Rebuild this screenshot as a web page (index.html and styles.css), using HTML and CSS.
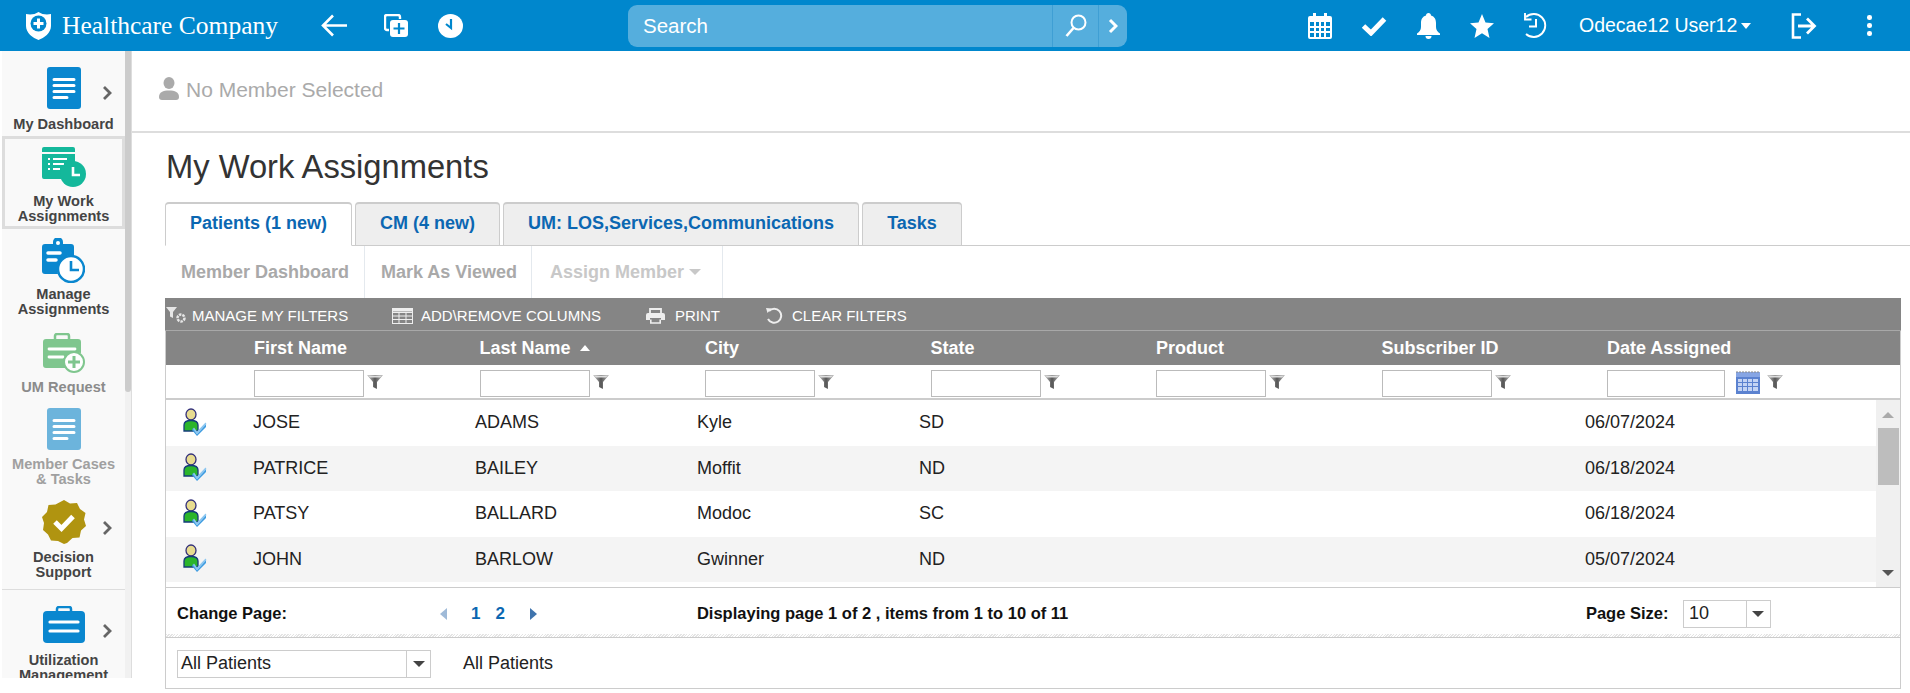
FILE: index.html
```html
<!DOCTYPE html>
<html lang="en">
<head>
<meta charset="utf-8">
<title>My Work Assignments</title>
<link rel="stylesheet" href="styles.css">
</head>
<body>
<svg class="defs" width="0" height="0" aria-hidden="true">
  <defs>
    <linearGradient id="fngrad" x1="0" y1="0" x2="1" y2="0">
      <stop offset="0" stop-color="#ccc"/>
      <stop offset=".5" stop-color="#555"/>
      <stop offset="1" stop-color="#bbb"/>
    </linearGradient>
    <symbol id="funnel" viewBox="0 0 16 14">
      <path d="M0 0H16L10 7V14L6 12V7Z" fill="url(#fngrad)"/>
      <path d="M1 .5H15L13 2.500H3Z" fill="#ddd"/>
    </symbol>
    <symbol id="person" viewBox="0 0 24 28">
      <ellipse cx="8" cy="6.500" rx="5" ry="5.500" fill="#e8dc90" stroke="#33307a" stroke-width="1.300"/>
      <path d="M1 23V17C1 13.500 4 12.500 8 12.500S15 13.500 15 17V23Z" fill="#2bb52b" stroke="#143c7a" stroke-width="1.300"/>
      <path d="M10 20L14 26L23 16V19L14 28L9 22Z" fill="#3d9be0"/>
      <path d="M11 19.500L14 23.500L22.500 14.500L23.500 16L14 26.500L10 21Z" fill="#8cc6f0"/>
    </symbol>
    <symbol id="chev" viewBox="0 0 10 16">
      <path d="M2 2L8 8L2 14" fill="none" stroke="#666" stroke-width="2.800"/>
    </symbol>
  </defs>
</svg>

<header class="topbar">
  <svg class="shield" width="25" height="28" viewBox="0 0 25 28"><path d="M0 2C4 3 9 2.500 12.500 0C16 2.500 21 3 25 2V14C25 21 18 26 12.500 28C7 26 0 21 0 14Z" fill="#fff"/><circle cx="12.500" cy="11.500" r="8" fill="#0087cd"/><path d="M12.500 6.500V16.500M7.500 11.500H17.500" stroke="#fff" stroke-width="3"/></svg>
  <span class="brand">Healthcare Company</span>
  <svg class="back" width="26" height="23" viewBox="0 0 26 23"><path d="M12 1.500L2 11.500L12 21.500M2 11.500H26" fill="none" stroke="#fff" stroke-width="2.600"/></svg>
  <svg class="copy" width="25" height="24" viewBox="0 0 25 24"><path d="M5 16H3A2 2 0 0 1 1 14V3A2 2 0 0 1 3 1H14A2 2 0 0 1 16 3V5" fill="none" stroke="#fff" stroke-width="2.400"/><rect x="6" y="6" width="18" height="17" rx="3" fill="#fff"/><path d="M15 9V20M9.500 14.500H20.500" stroke="#0087cd" stroke-width="2.200"/></svg>
  <svg class="clock" width="25" height="24" viewBox="0 0 25 24"><ellipse cx="12.500" cy="12" rx="12.500" ry="12" fill="#fff"/><path d="M13 5V14L8 10" fill="none" stroke="#0087cd" stroke-width="2.200"/></svg>
  <div class="search">
    <span class="search-text">Search</span>
    <span class="search-btn"><svg width="22" height="24" viewBox="0 0 22 24"><circle cx="13.500" cy="8.500" r="7" fill="none" stroke="#fff" stroke-width="2"/><path d="M8.500 14L1.500 22" stroke="#fff" stroke-width="2.600"/></svg></span>
    <span class="search-more"><svg width="10" height="16" viewBox="0 0 10 16"><path d="M2 2L8 8L2 14" fill="none" stroke="#fff" stroke-width="3"/></svg></span>
  </div>
  <svg class="cal" width="24" height="26" viewBox="0 0 24 26"><path fill-rule="evenodd" fill="#fff" d="M2 3H5V0H8V3H16V0H19V3H22A2 2 0 0 1 24 5V24A2 2 0 0 1 22 26H2A2 2 0 0 1 0 24V5A2 2 0 0 1 2 3ZM2 9V13H6V9ZM8 9V13H11V9ZM13 9V13H16V9ZM18 9V13H22V9ZM2 15V18H6V15ZM8 15V18H11V15ZM13 15V18H16V15ZM18 15V18H22V15ZM2 20V24H6V20ZM8 20V24H11V20ZM13 20V24H16V20ZM18 20V24H22V20Z"/></svg>
  <svg class="check" width="26" height="20" viewBox="0 0 26 20"><path d="M2.500 10L10 17L23.500 3" fill="none" stroke="#fff" stroke-width="5"/></svg>
  <svg class="bell" width="23" height="26" viewBox="0 0 23 26"><path d="M11.500 0C13 0 14 1 14 2.500C17.500 3.500 19 6.500 19 10V14C19 17 20.500 19 23 20.500V22H0V20.500C2.500 19 4 17 4 14V10C4 6.500 5.500 3.500 9 2.500C9 1 10 0 11.500 0Z" fill="#fff"/><path d="M8.500 23H14.500A3 3 0 0 1 8.500 23Z" fill="#fff"/></svg>
  <svg class="star" width="24" height="24" viewBox="0 0 24 24"><path d="M12 0L15.500 8.500L24 9.200L17.500 15L19.500 24L12 19.200L4.500 24L6.500 15L0 9.200L8.500 8.500Z" fill="#fff"/></svg>
  <svg class="hist" width="25" height="25" viewBox="0 0 25 25"><path d="M3 4A11.500 11.500 0 1 1 3 21" fill="none" stroke="#fff" stroke-width="1.900"/><path d="M2 1V7.500H8.500" fill="none" stroke="#fff" stroke-width="1.900" transform="translate(0 -1)"/><path d="M13 6V13.500H6" fill="none" stroke="#fff" stroke-width="2"/></svg>
  <span class="user">Odecae12 User12</span><span class="user-caret"></span>
  <svg class="logout" width="26" height="26" viewBox="0 0 26 26"><path d="M10 1.500H2V24.500H10" fill="none" stroke="#fff" stroke-width="2.600"/><path d="M7 13H23M16 5.500L23.500 13L16 20.500" fill="none" stroke="#fff" stroke-width="2.800"/></svg>
  <span class="kebab"><i></i><i></i><i></i></span>
</header>

<div class="shell">
  <nav class="sidebar">
    <div class="nav-list">
      <a class="nav-item item-dash">
        <svg width="34" height="42" viewBox="0 0 34 42"><rect width="34" height="42" rx="3" fill="#0a87cf"/><path d="M7 12.500H27M7 18.500H27M7 24.500H27M7 30.500H20" stroke="#fff" stroke-width="3" stroke-linecap="round"/></svg>
        <span class="nav-label">My Dashboard</span>
        <svg class="nav-chev" width="10" height="16"><use href="#chev"/></svg>
      </a>
      <a class="nav-item nav-active item-work">
        <svg width="44" height="40" viewBox="0 0 44 40"><path d="M2 0H31A2 2 0 0 1 33 2V5H0V2A2 2 0 0 1 2 0Z" fill="#14b89b"/><path d="M0 7H33V18A13 13 0 0 0 19 32H2A2 2 0 0 1 0 30Z" fill="#14b89b"/><path d="M6 12H8M11 12H25M6 17H8M11 17H22M6 22H8M11 22H18" stroke="#fff" stroke-width="2"/><circle cx="31" cy="27" r="13" fill="#14b89b"/><circle cx="31" cy="27" r="10.500" fill="none" stroke="#14b89b"/><path d="M31 20V28H38" fill="none" stroke="#fff" stroke-width="2.600"/></svg>
        <span class="nav-label">My Work<br>Assignments</span>
      </a>
      <a class="nav-item item-manage">
        <svg width="43" height="45" viewBox="0 0 43 45"><path d="M3 6H11V4A5 5 0 0 1 21 4V6H29A3 3 0 0 1 32 9V17A15 15 0 0 0 16 36H3A3 3 0 0 1 0 33V9A3 3 0 0 1 3 6Z" fill="#0a87cf"/><circle cx="16" cy="5" r="2" fill="#fff"/><path d="M6 15H18M6 22H14" stroke="#fff" stroke-width="3.500" stroke-linecap="round"/><circle cx="29" cy="31" r="13" fill="#fff" stroke="#0a87cf" stroke-width="2.500"/><path d="M29 23V32H37" fill="none" stroke="#0a87cf" stroke-width="2.600"/></svg>
        <span class="nav-label">Manage<br>Assignments</span>
      </a>
      <a class="nav-item item-um nav-muted">
        <svg width="42" height="40" viewBox="0 0 42 40"><path d="M12 6V3A2 2 0 0 1 14 1H24A2 2 0 0 1 26 3V6" fill="none" stroke="#7fc68e" stroke-width="2.500"/><path d="M3 6H35A3 3 0 0 1 38 9V20A14 14 0 0 0 22 35H3A3 3 0 0 1 0 32V9A3 3 0 0 1 3 6Z" fill="#7fc68e"/><path d="M6 16H32M6 24H20" stroke="#fff" stroke-width="2.800" stroke-linecap="round"/><circle cx="31" cy="29" r="10" fill="#fff" stroke="#7fc68e" stroke-width="2"/><path d="M31 23V35M25 29H37" stroke="#7fc68e" stroke-width="3"/></svg>
        <span class="nav-label">UM Request</span>
      </a>
      <a class="nav-item item-cases nav-faint">
        <svg width="34" height="42" viewBox="0 0 34 42"><rect width="34" height="42" rx="3" fill="#6cb4dc"/><path d="M7 12.500H27M7 18.500H27M7 24.500H27M7 30.500H20" stroke="#fff" stroke-width="3" stroke-linecap="round"/></svg>
        <span class="nav-label">Member Cases<br>&amp; Tasks</span>
      </a>
      <a class="nav-item item-decision">
        <svg width="44" height="44" viewBox="0 0 44 44"><path d="M22 0L28 3.500L35 3L38 9L43.500 13L42 19.500L44 26L39 30.500L37.500 37.500L30.500 38L25 43L22 44L16 41L9 40.500L6 34.500L1 30L2 23L0 17L5 12L6.500 5L13.500 4.500Z" fill="#b09410"/><path d="M13 22L19.500 28.500L31 16.500" fill="none" stroke="#fff" stroke-width="5"/></svg>
        <span class="nav-label">Decision<br>Support</span>
        <svg class="nav-chev" width="10" height="16"><use href="#chev"/></svg>
      </a>
      <a class="nav-item item-util">
        <svg width="42" height="37" viewBox="0 0 42 37"><path d="M14 6V3A2 2 0 0 1 16 1H26A2 2 0 0 1 28 3V6" fill="none" stroke="#0a87cf" stroke-width="2.500"/><rect y="5" width="42" height="32" rx="4" fill="#0a87cf"/><path d="M7 16H35M7 25H35" stroke="#fff" stroke-width="3.200" stroke-linecap="round"/></svg>
        <span class="nav-label">Utilization<br>Management</span>
        <svg class="nav-chev" width="10" height="16"><use href="#chev"/></svg>
      </a>
    </div>
    <div class="side-scroll"><div class="side-thumb"></div></div>
  </nav>

  <main class="content">
    <div class="member-bar">
      <svg width="20" height="23" viewBox="0 0 20 23"><ellipse cx="10" cy="6" rx="5.500" ry="6" fill="#aaa"/><path d="M0 20C0 15 4 13.500 10 13.500S20 15 20 20C20 22 19 23 17 23H3C1 23 0 22 0 20Z" fill="#aaa"/></svg>
      <span>No Member Selected</span>
    </div>

    <h1 class="page-title">My Work Assignments</h1>

    <div class="tabs">
      <a class="tab tab-active tab-patients">Patients (1 new)</a>
      <a class="tab tab-cm">CM (4 new)</a>
      <a class="tab tab-um">UM: LOS,Services,Communications</a>
      <a class="tab tab-tasks">Tasks</a>
    </div>

    <div class="actions">
      <a class="action action-dash">Member Dashboard</a>
      <a class="action action-mark">Mark As Viewed</a>
      <a class="action action-assign">Assign Member<span class="caret-light"></span></a>
    </div>

    <section class="grid">
      <div class="toolbar">
        <span class="tool tool-filters">
          <svg width="21" height="17" viewBox="0 0 21 17"><path d="M0 0H11L7 5V11L4 9.500V5Z" fill="#e6e6e6"/><circle cx="15" cy="11" r="3.500" fill="none" stroke="#e6e6e6" stroke-width="2.500" stroke-dasharray="2.500 1"/></svg>MANAGE MY FILTERS</span>
        <span class="tool tool-cols">
          <svg width="21" height="16" viewBox="0 0 21 16"><rect x=".5" y=".5" width="20" height="15" fill="none" stroke="#eee"/><path d="M0 4.500H21M1 8H20M1 11.500H20M7 4V15M14 4V15" stroke="#eee"/><rect width="21" height="3.500" fill="#eee"/></svg>ADD\REMOVE COLUMNS</span>
        <span class="tool tool-print">
          <svg width="19" height="16" viewBox="0 0 19 16"><path d="M4 5V1H15V5" fill="none" stroke="#eee" stroke-width="1.800"/><path d="M2 5H17A2 2 0 0 1 19 7V12H15V10H4V12H0V7A2 2 0 0 1 2 5Z" fill="#eee"/><path d="M4.800 11.500V15H14.200V11.500" fill="none" stroke="#eee" stroke-width="1.600"/></svg>PRINT</span>
        <span class="tool tool-clear">
          <svg width="18" height="17" viewBox="0 0 18 17"><path d="M4 4A7 7 0 1 1 3 12" fill="none" stroke="#eee" stroke-width="2"/><path d="M1 1L6.500 1.500L2.500 6Z" fill="#eee"/></svg>CLEAR FILTERS</span>
      </div>

      <div class="head-row">
        <span class="head-spacer"></span>
        <span>First Name</span>
        <span>Last Name<i class="sort-up"></i></span>
        <span>City</span>
        <span>State</span>
        <span>Product</span>
        <span>Subscriber ID</span>
        <span>Date Assigned</span>
      </div>

      <div class="filter-row">
        <span class="head-spacer"></span>
        <div class="filter"><span class="fake-input"></span><svg class="fn" width="16" height="14"><use href="#funnel"/></svg></div>
        <div class="filter"><span class="fake-input"></span><svg class="fn" width="16" height="14"><use href="#funnel"/></svg></div>
        <div class="filter"><span class="fake-input"></span><svg class="fn" width="16" height="14"><use href="#funnel"/></svg></div>
        <div class="filter"><span class="fake-input"></span><svg class="fn" width="16" height="14"><use href="#funnel"/></svg></div>
        <div class="filter"><span class="fake-input"></span><svg class="fn" width="16" height="14"><use href="#funnel"/></svg></div>
        <div class="filter"><span class="fake-input"></span><svg class="fn" width="16" height="14"><use href="#funnel"/></svg></div>
        <div class="filter">
          <span class="fake-input input-date"></span>
          <svg class="cal-blue" width="24" height="23" viewBox="0 0 24 23"><rect y="1" width="24" height="22" fill="#5b82d0"/><rect y="1" width="24" height="5" fill="#86a5e4"/><path d="M1 0V2M4 0V2M7 0V2M10 0V2M13 0V2M16 0V2M19 0V2M22 0V2" stroke="#888"/><path fill="#c4d4f4" d="M2 8h4v3H2zM7 8h4v3H7zM12 8h4v3h-4zM17 8h5v3h-5zM2 12h4v3H2zM7 12h4v3H7zM12 12h4v3h-4zM17 12h5v3h-5zM2 16h4v4H2zM7 16h4v4H7zM12 16h4v4h-4zM17 16h5v4h-5z"/></svg>
          <svg class="fn fn-date" width="16" height="14"><use href="#funnel"/></svg>
        </div>
      </div>

      <div class="rows-wrap">
        <div class="rows">
          <div class="row"><svg width="24" height="28"><use href="#person"/></svg><span>JOSE</span><span>ADAMS</span><span>Kyle</span><span>SD</span><span></span><span></span><span>06/07/2024</span></div>
          <div class="row row-alt"><svg width="24" height="28"><use href="#person"/></svg><span>PATRICE</span><span>BAILEY</span><span>Moffit</span><span>ND</span><span></span><span></span><span>06/18/2024</span></div>
          <div class="row"><svg width="24" height="28"><use href="#person"/></svg><span>PATSY</span><span>BALLARD</span><span>Modoc</span><span>SC</span><span></span><span></span><span>06/18/2024</span></div>
          <div class="row row-alt"><svg width="24" height="28"><use href="#person"/></svg><span>JOHN</span><span>BARLOW</span><span>Gwinner</span><span>ND</span><span></span><span></span><span>05/07/2024</span></div>
        </div>
        <div class="vscroll">
          <i class="arrow-up"></i>
          <div class="vthumb"></div>
          <i class="arrow-down"></i>
        </div>
      </div>

      <div class="pager">
        <span class="pager-label">Change Page:</span>
        <i class="pg-prev"></i>
        <a class="pg-num pg-one">1</a>
        <a class="pg-num pg-two">2</a>
        <i class="pg-next"></i>
        <span class="pager-info">Displaying page 1 of 2 , items from 1 to 10 of 11</span>
        <span class="pager-size">Page Size:</span>
        <div class="combo combo-size"><span>10</span><b><i class="arrow-dark"></i></b></div>
      </div>
      <div class="dots"></div>

      <div class="grid-foot">
        <div class="combo combo-view"><span>All Patients</span><b><i class="arrow-dark"></i></b></div>
        <span class="foot-label">All Patients</span>
      </div>
    </section>
  </main>
</div>
</body>
</html>
```

FILE: styles.css
```css
* { box-sizing: border-box; }
html, body { margin: 0; height: 693px; overflow: hidden; }
body { font-family: "Liberation Sans", Arial, sans-serif; color: #222; background: #fff; }
.defs { position: absolute; }
svg { display: block; flex: none; }

/* top bar */
.topbar { height: 51px; background: #0087cd; display: flex; align-items: center; padding-left: 26px; color: #fff; }
.brand { font-family: "Liberation Serif", serif; font-size: 25.500px; margin-left: 11px; width: 217px; white-space: nowrap; }
.back { margin-left: 42px; }
.copy { margin-left: 37px; }
.clock { margin-left: 29px; }
.search { margin-left: 165px; width: 499px; height: 42px; border-radius: 9px; background: #55aedd; display: flex; align-items: center; }
.search-text { flex: 1; padding-left: 15px; font-size: 20.500px; }
.search-btn { width: 46px; height: 42px; border-left: 1px solid #3f9fd4; display: flex; align-items: center; justify-content: center; }
.search-more { width: 29px; height: 42px; border-left: 1px solid #3f9fd4; display: flex; align-items: center; justify-content: center; }
.cal { margin-left: 181px; }
.check { margin-left: 29px; }
.bell { margin-left: 30px; }
.star { margin-left: 30px; }
.hist { margin-left: 29px; }
.user { margin-left: 31px; font-size: 19.500px; white-space: nowrap; }
.user-caret { margin-left: 4px; width: 0; height: 0; border: 5.500px solid transparent; border-top: 6px solid #fff; border-bottom: 0; }
.logout { margin-left: 40px; }
.kebab { margin-left: 50px; display: flex; flex-direction: column; gap: 3.500px; }
.kebab i { width: 4.500px; height: 4.500px; border-radius: 50%; background: #fff; }

/* shell */
.shell { display: flex; align-items: flex-start; }

/* sidebar */
.sidebar { width: 132px; height: 627px; display: flex; flex: none; padding-left: 2px; overflow: hidden; }
.nav-list { width: 123px; background: #f9f9f9; flex: none; }
.nav-item { position: relative; display: flex; flex-direction: column; align-items: center; font-size: 14.600px; font-weight: 700; line-height: 15px; color: #444; text-align: center; }
.nav-label { display: block; white-space: nowrap; }
.nav-chev { position: absolute; left: 100px; }
.item-dash { height: 85px; padding-top: 16px; }
.item-dash .nav-label { margin-top: 8px; }
.item-dash .nav-chev { top: 34px; }
.nav-active { height: 93px; padding-top: 8px; border: 3px solid #ddd; }
.item-work .nav-label { margin-top: 7px; }
.item-manage { height: 91px; padding-top: 9px; }
.item-manage .nav-label { margin-top: 4px; }
.item-um { height: 80px; padding-top: 13px; }
.item-um .nav-label { margin-top: 7px; }
.item-cases { height: 90px; padding-top: 8px; }
.item-cases .nav-label { margin-top: 7px; }
.item-decision { height: 100px; padding-top: 10px; border-bottom: 1px solid #ddd; }
.item-decision .nav-label { margin-top: 6px; }
.item-decision .nav-chev { top: 30px; }
.item-util { height: 90px; padding-top: 16px; }
.item-util .nav-label { margin-top: 10px; }
.item-util .nav-chev { top: 33px; }
.nav-muted { color: #8b8b8b; }
.nav-faint { color: #a0a0a0; }
.side-scroll { width: 7px; flex: none; background: #f1f1f1; border-right: 1px solid #ddd; }
.side-thumb { height: 341px; width: 6px; background: #ccc; border-radius: 0 0 3px 3px; }

/* content */
.content { flex: 1; min-width: 0; }
.member-bar { height: 82px; border-bottom: 2px solid #ddd; padding: 24px 0 0 27px; display: flex; align-items: flex-start; gap: 7px; color: #aaa; font-size: 21px; line-height: 26px; }
.member-bar span { margin-top: 2px; }
.member-bar svg { margin-top: 2px; }
.page-title { margin: 0; padding: 16px 0 0 34px; height: 69px; font-size: 32.700px; line-height: 36px; font-weight: 400; color: #333; }

/* tabs */
.tabs { height: 44px; margin-left: 33px; border-bottom: 1px solid #ccc; display: flex; gap: 3px; }
.tab { height: 44px; border: 1px solid #ccc; border-top-width: 2px; border-radius: 4px 4px 0 0; background: #eee; color: #0b67b2; font-size: 18px; font-weight: 700; line-height: 38px; text-align: center; white-space: nowrap; }
.tab-active { background: #fff; border-bottom-color: #fff; }
.tab-patients { width: 187px; }
.tab-cm { width: 145px; }
.tab-um { width: 356px; }
.tab-tasks { width: 100px; }

/* actions */
.actions { height: 52px; margin-left: 33px; display: flex; font-size: 18px; font-weight: 700; line-height: 52px; color: #a9a9a9; }
.action { height: 52px; border-right: 1px solid #e4e9ee; white-space: nowrap; }
.action-dash { width: 200px; padding-left: 16px; }
.action-mark { width: 167px; padding-left: 16px; }
.action-assign { width: 191px; padding-left: 18px; color: #c8c8c8; }
.caret-light { display: inline-block; margin-left: 5px; vertical-align: 3px; width: 0; height: 0; border: 6.500px solid transparent; border-top: 6px solid #c8c8c8; border-bottom: 0; }

/* grid */
.grid { margin: 0 9px 0 33px; height: 391px; border: solid #ccc; border-width: 0 1px 1px; }
.toolbar { height: 33px; margin: 0 -1px; padding-top: 3px; background: #858585; border-bottom: 1px solid #a8a8a8; display: flex; align-items: center; color: #fff; font-size: 15px; }
.tool { display: flex; align-items: center; white-space: nowrap; }
.tool-filters { margin-left: 1px; gap: 5px; width: 226px; }
.tool-cols { gap: 8px; width: 254px; }
.tool-print { gap: 10px; width: 119px; }
.tool-clear { gap: 9px; }
.head-row { height: 34px; display: grid; grid-template-columns: 88px repeat(7, 225.500px); align-items: start; background: #858585; color: #fff; font-size: 18px; font-weight: 700; line-height: 35px; }
.sort-up { display: inline-block; margin-left: 9px; vertical-align: 3px; width: 0; height: 0; border: 5.500px solid transparent; border-bottom: 6px solid #fff; border-top: 0; }
.filter-row { height: 35px; display: grid; grid-template-columns: 88px repeat(7, 225.500px); border-bottom: 2px solid #ccc; }
.filter { display: flex; align-items: flex-start; padding-top: 5px; }
.fake-input { display: block; width: 110px; height: 27px; border: 1px solid #bbb; background: #fff; }
.input-date { width: 118px; }
.fn { margin: 5px 0 0 3px; }
.fn-date { margin-left: 7px; }
.cal-blue { margin: 1px 0 0 11px; }
.rows-wrap { height: 188px; display: flex; border-bottom: 1px solid #ccc; }
.rows { flex: 1; min-width: 0; }
.row { height: 45.500px; display: grid; grid-template-columns: 87px repeat(7, 222px); align-items: center; font-size: 18px; color: #222; }
.row svg { margin: -2px 0 0 17px; }
.row-alt { background: #f4f4f4; }
.vscroll { width: 24px; background: #f0f0f0; display: flex; flex-direction: column; align-items: center; padding-top: 12px; }
.vthumb { width: 21px; height: 57px; margin-top: 10px; background: #bdbdbd; }
.arrow-up { width: 0; height: 0; border: 6px solid transparent; border-bottom: 6px solid #aaa; border-top: 0; }
.arrow-down { margin-top: 85px; width: 0; height: 0; border: 6px solid transparent; border-top: 6px solid #555; border-bottom: 0; }
.pager { height: 46px; padding: 5px 0 0 11px; display: flex; align-items: center; font-size: 16.500px; font-weight: 700; color: #111; }
.pager-label { width: 262px; }
.pg-prev { width: 0; height: 0; border: 6px solid transparent; border-right: 7px solid #9fbad8; border-left: 0; margin-left: 1px; }
.pg-num { color: #0b67b2; font-size: 17px; }
.pg-one { margin-left: 24px; }
.pg-two { margin-left: 15px; }
.pg-next { margin-left: 25px; width: 0; height: 0; border: 6px solid transparent; border-left: 7px solid #3f74ad; border-right: 0; }
.pager-info { margin-left: 160px; width: 889px; white-space: nowrap; }
.pager-size { width: 97px; white-space: nowrap; }
.combo { display: flex; height: 28px; border: 1px solid #ccc; background: #fff; font-size: 18px; font-weight: 400; color: #222; line-height: 24px; }
.combo span { flex: 1; padding-left: 3px; }
.combo b { width: 24px; border-left: 1px solid #ccc; display: flex; align-items: center; justify-content: center; }
.combo-size { width: 88px; }
.combo-size span { padding-left: 5px; }
.combo-view { width: 254px; }
.arrow-dark { width: 0; height: 0; border: 6px solid transparent; border-top: 6px solid #444; border-bottom: 0; }
.dots { height: 4px; border-bottom: 1px solid #ccc; background: repeating-linear-gradient(135deg, #e4e4e4 0 1px, #fff 1px 2px); }
.grid-foot { height: 50px; padding: 2px 0 0 11px; display: flex; align-items: center; font-size: 18px; color: #222; }
.foot-label { margin: 0 0 2px 32px; }
```
